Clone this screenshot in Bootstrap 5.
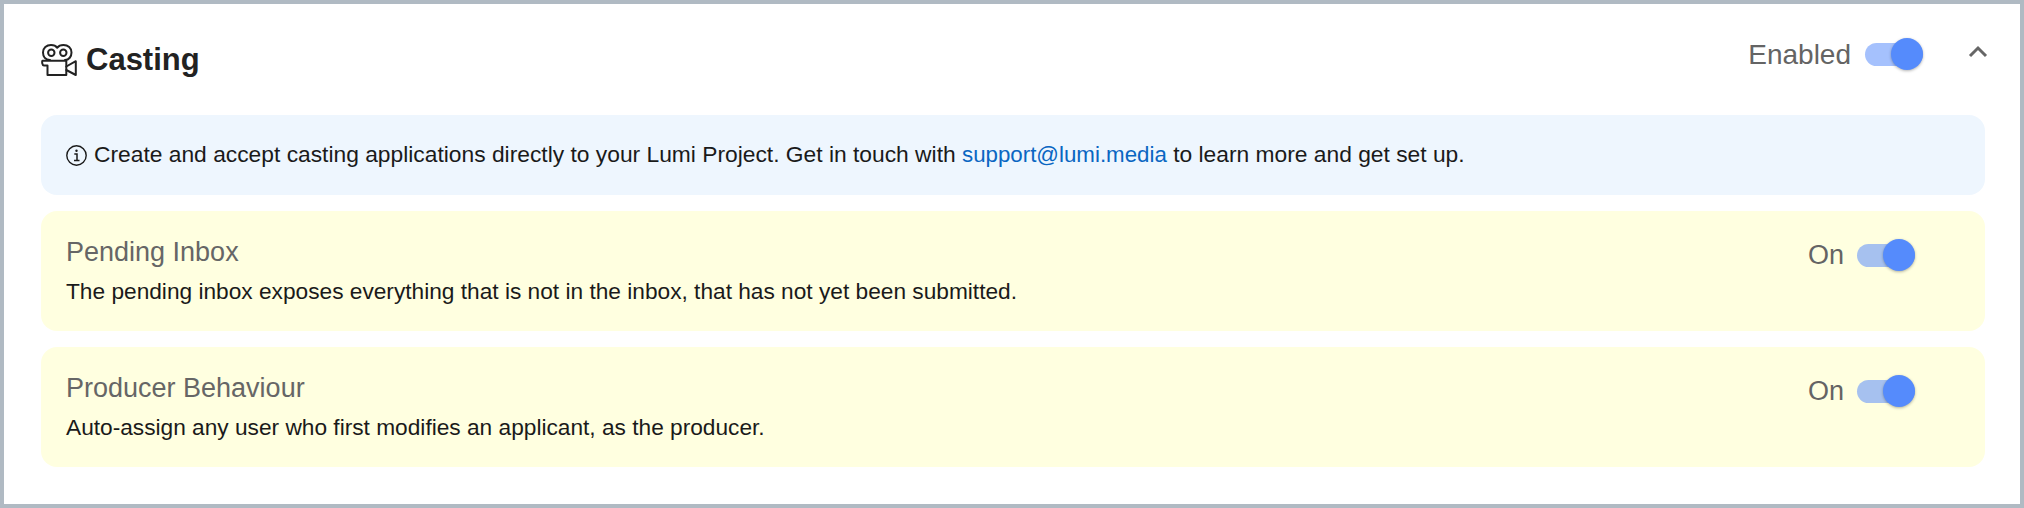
<!DOCTYPE html>
<html><head><meta charset="utf-8">
<link href="https://cdn.jsdelivr.net/npm/bootstrap@5.3.0/dist/css/bootstrap.min.css" rel="stylesheet">
<style>
html,body{margin:0;height:508px;overflow:hidden;background:#fff}
body{font-family:"Liberation Sans",Arial,sans-serif;color:#1a1a1a}
.frame{height:508px;border:4px solid #b0bac3;padding:0 35px 0 37px}
.head{height:111px}
.head-title{font-size:31px;font-weight:700;color:#222;line-height:36px;margin-left:1px}
.toggle-label{font-size:28px;color:#646464;line-height:34px}
.label-on{font-size:27px}
.sw{width:58px;height:23px;border-radius:12px;background:#a5c1fd;position:relative;display:inline-block;flex:none}
.sw-soft{background:#a6c1ef}
.sw::after{content:"";position:absolute;right:0;top:-5px;width:32px;height:32px;border-radius:50%;background:#558bfc;box-shadow:0 1px 3px rgba(0,0,0,.3)}
.info{height:80px;background:#eef6fe;border-radius:16px;font-size:22.8px;margin-bottom:16px;padding:0 0 2px 25px;gap:7px;color:#1a1a1a}
.info a{color:#0a66c2;text-decoration:none;font-size:22.3px}
.info svg{flex:none;margin-top:2px}
.panel-box{height:120px;background:#ffffe0;border-radius:16px;margin-bottom:16px;padding:25px 70px 0 25px}
.panel-title{font-size:27px;color:#666;line-height:32px}
.panel-text{font-size:22.7px;line-height:30px;margin-top:8px}
.sw-row{gap:13px;margin-top:2px}
.chev{margin:0 -3px 6px 31px}
.head-sw{gap:14px;margin-top:-10px}
</style></head><body>
<div class="frame">
<div class="head d-flex align-items-center justify-content-between">
<div class="d-flex align-items-center gap-2">
<svg width="36" height="32" viewBox="0 0 36 32" fill="none" stroke="#222" stroke-width="2" stroke-linejoin="round" stroke-linecap="round"><path d="M9 16C4.500 16 2 12.500 2 8.500C2 4 5.500 1 10 1C13 1 15 2 16.300 3.800C17.500 2 19.500 1 22.500 1C27 1 30.500 4 30.500 8.500C30.500 12.500 28 16 24 16"/><circle cx="10.300" cy="8.700" r="3.200"/><circle cx="22.300" cy="8.700" r="3.200"/><path d="M1.500 16.800H25.300V31H6.500V21.500H3C1.200 21.500 0.800 17.500 1.500 16.800Z"/><path d="M25.300 22.500L34.800 17.200V31L25.300 26"/></svg>
<span class="head-title">Casting</span></div>
<div class="d-flex align-items-center head-sw"><span class="toggle-label">Enabled</span><span class="sw"></span>
<svg class="chev" width="20" height="13" viewBox="0 0 20 13" fill="none" stroke="#666" stroke-width="3"><path d="M2 11L10 3L18 11"/></svg></div>
</div>
<div class="info d-flex align-items-center">
<svg width="21" height="21" viewBox="0 0 21 21" fill="none" stroke="#1a1a1a"><circle cx="10.500" cy="10.500" r="9.700" stroke-width="1.400"/><path d="M8.300 9H11V15.500M8 15.500H13.500" stroke-width="1.500"/><circle cx="10.500" cy="5.800" r="1.200" fill="#1a1a1a" stroke="none"/></svg>
<span>Create and accept casting applications directly to your Lumi Project. Get in touch with <a href="#">support@lumi.media</a> to learn more and get set up.</span></div>
<div class="panel-box d-flex justify-content-between"><div><div class="panel-title">Pending Inbox</div><div class="panel-text">The pending inbox exposes everything that is not in the inbox, that has not yet been submitted.</div></div><div class="d-flex align-items-center align-self-start sw-row"><span class="toggle-label label-on">On</span><span class="sw sw-soft"></span></div></div>
<div class="panel-box d-flex justify-content-between"><div><div class="panel-title">Producer Behaviour</div><div class="panel-text">Auto-assign any user who first modifies an applicant, as the producer.</div></div><div class="d-flex align-items-center align-self-start sw-row"><span class="toggle-label label-on">On</span><span class="sw sw-soft"></span></div></div>
</div>
<script src="https://cdn.jsdelivr.net/npm/bootstrap@5.3.0/dist/js/bootstrap.bundle.min.js"></script>
</body></html>
